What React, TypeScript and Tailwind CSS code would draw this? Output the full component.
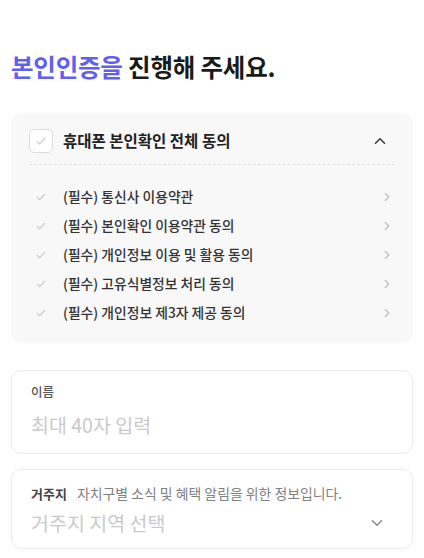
const font = { fontFamily: '"Noto Sans CJK KR", "Noto Sans", sans-serif' }

const terms = [
  "(필수) 통신사 이용약관",
  "(필수) 본인확인 이용약관 동의",
  "(필수) 개인정보 이용 및 활용 동의",
  "(필수) 고유식별정보 처리 동의",
  "(필수) 개인정보 제3자 제공 동의",
]

function Check({ className }: { className: string }) {
  return (
    <svg viewBox="0 0 24 24" className={className} fill="none" stroke="currentColor" strokeWidth="1.6" strokeLinecap="round" strokeLinejoin="round">
      <path d="M6.5 12.5l3.5 3.5 7.5-8" />
    </svg>
  )
}

function Chevron({ dir, className }: { dir: "up" | "down" | "right"; className: string }) {
  const d = dir === "up" ? "M6 15l6-6 6 6" : dir === "down" ? "M6 9l6 6 6-6" : "M9 6l6 6-6 6"
  return (
    <svg viewBox="0 0 24 24" className={className} fill="none" stroke="currentColor" strokeWidth="2" strokeLinecap="round" strokeLinejoin="round">
      <path d={d} />
    </svg>
  )
}

export default function App() {
  return (
    <main className="min-h-screen w-full bg-white px-[11px] pt-[51px]" style={font}>
      <h1 className="text-[24.5px] font-bold leading-[32px] tracking-[-0.2px] text-[#1a1a1a]">
        <span className="text-[#5f5ff2]">본인인증을</span> 진행해 주세요.
      </h1>

      {/* 약관 동의 */}
      <section className="mt-[30px] rounded-[10px] bg-[#f8f8f8] px-[18px] pb-[16px] pt-[16px]">
        <div className="flex h-6 items-center">
          <span className="flex h-6 w-6 items-center justify-center rounded-[5px] border border-[#dcdcdc] bg-white text-[#cfcfcf]">
            <Check className="h-[18px] w-[18px]" />
          </span>
          <span className="ml-[10px] flex-1 text-[15.5px] font-semibold text-[#222]">휴대폰 본인확인 전체 동의</span>
          <Chevron dir="up" className="mr-[6px] h-[18px] w-[18px] text-[#3a3a3a]" />
        </div>
        <div className="mt-[11px] border-t border-dashed border-[#e2e2e2]" />
        <ul className="mt-[17px] flex flex-col">
          {terms.map((t) => (
            <li key={t} className="flex h-[29px] items-center">
              <span className="flex w-6 justify-center text-[#c6c6c6]">
                <Check className="h-[16px] w-[16px]" />
              </span>
              <span className="ml-[10px] flex-1 text-[13.8px] font-medium text-[#333]">{t}</span>
              <Chevron dir="right" className="mr-[1px] h-[14px] w-[14px] text-[#bdbdbd]" />
            </li>
          ))}
        </ul>
      </section>

      {/* 이름 */}
      <div className="mt-[27px] rounded-[10px] border border-[#ececec] px-[19px] pb-[15px] pt-[13px]">
        <p className="text-[12.5px] font-medium leading-4 text-[#555]">이름</p>
        <p className="mt-[12px] text-[19.5px] leading-[26px] text-[#c9c9c9]">최대 40자 입력</p>
      </div>

      {/* 거주지 */}
      <div className="mt-[15px] rounded-[10px] border border-[#ececec] px-[19px] pb-[12px] pt-[15px]">
        <p className="flex items-baseline leading-4">
          <span className="text-[13px] font-semibold text-[#444]">거주지</span>
          <span className="ml-[10px] text-[13.9px] text-[#808080]">자치구별 소식 및 혜택 알림을 위한 정보입니다.</span>
        </p>
        <div className="mt-[8px] flex items-center">
          <p className="flex-1 text-[19.5px] leading-[26px] text-[#c9c9c9]">거주지 지역 선택</p>
          <Chevron dir="down" className="mr-[7px] h-[18px] w-[18px] text-[#8a8a8a]" />
        </div>
      </div>
    </main>
  )
}
